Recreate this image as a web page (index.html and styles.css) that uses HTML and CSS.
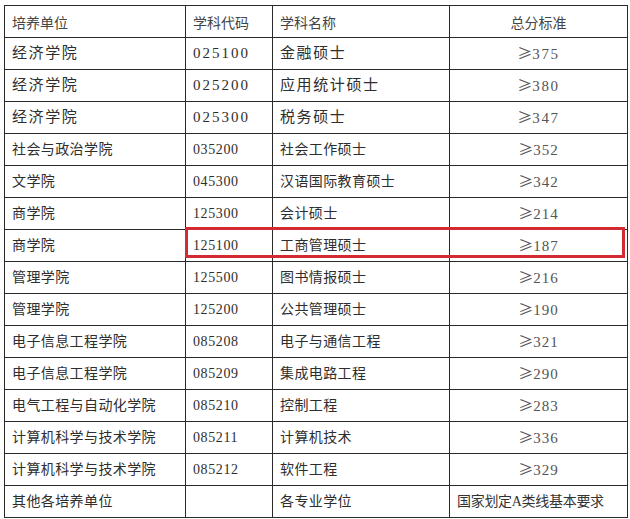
FILE: index.html
```html
<!DOCTYPE html>
<html lang="zh-CN">
<head>
<meta charset="utf-8">
<link rel="stylesheet" href="styles.css">
</head>
<body>
<div class="wrap">
<table class="grid">
  <colgroup>
    <col class="c1"><col class="c2"><col class="c3"><col class="c4">
  </colgroup>
  <tr class="head"><td>培养单位</td><td>学科代码</td><td>学科名称</td><td class="score">总分标准</td></tr>
  <tr class="big"><td>经济学院</td><td class="code">025100</td><td>金融硕士</td><td class="score"><span class="ge">≥</span>375</td></tr>
  <tr class="big"><td>经济学院</td><td class="code">025200</td><td>应用统计硕士</td><td class="score"><span class="ge">≥</span>380</td></tr>
  <tr class="big"><td>经济学院</td><td class="code">025300</td><td>税务硕士</td><td class="score"><span class="ge">≥</span>347</td></tr>
  <tr><td>社会与政治学院</td><td class="code">035200</td><td>社会工作硕士</td><td class="score"><span class="ge">≥</span>352</td></tr>
  <tr><td>文学院</td><td class="code">045300</td><td>汉语国际教育硕士</td><td class="score"><span class="ge">≥</span>342</td></tr>
  <tr><td>商学院</td><td class="code">125300</td><td>会计硕士</td><td class="score"><span class="ge">≥</span>214</td></tr>
  <tr><td>商学院</td><td class="code">125100</td><td>工商管理硕士</td><td class="score"><span class="ge">≥</span>187</td></tr>
  <tr><td>管理学院</td><td class="code">125500</td><td>图书情报硕士</td><td class="score"><span class="ge">≥</span>216</td></tr>
  <tr><td>管理学院</td><td class="code">125200</td><td>公共管理硕士</td><td class="score"><span class="ge">≥</span>190</td></tr>
  <tr><td>电子信息工程学院</td><td class="code">085208</td><td>电子与通信工程</td><td class="score"><span class="ge">≥</span>321</td></tr>
  <tr><td>电子信息工程学院</td><td class="code">085209</td><td>集成电路工程</td><td class="score"><span class="ge">≥</span>290</td></tr>
  <tr><td>电气工程与自动化学院</td><td class="code">085210</td><td>控制工程</td><td class="score"><span class="ge">≥</span>283</td></tr>
  <tr><td>计算机科学与技术学院</td><td class="code">085211</td><td>计算机技术</td><td class="score"><span class="ge">≥</span>336</td></tr>
  <tr><td>计算机科学与技术学院</td><td class="code">085212</td><td>软件工程</td><td class="score"><span class="ge">≥</span>329</td></tr>
  <tr><td>其他各培养单位</td><td class="code"></td><td>各专业学位</td><td class="note">国家划定A类线基本要求</td></tr>
</table>
<div class="highlight"></div>
</div>
</body>
</html>
```

FILE: styles.css
```css
html, body {
  margin: 0;
  padding: 0;
  background: #ffffff;
}
body {
  font-family: "Liberation Serif", "Noto Sans CJK SC", serif;
  color: #2e2e2e;
}
.wrap {
  position: relative;
  padding: 5px 0 0 4px;
}
.grid {
  border-collapse: collapse;
  table-layout: fixed;
  width: 623px;
}
.c1 { width: 181px; }
.c2 { width: 87px; }
.c3 { width: 177px; }
.c4 { width: 178px; }
.grid td {
  border: 1px solid #2a2a2a;
  height: 31px;
  padding: 0 0 0 7px;
  font-size: 14px;
  letter-spacing: 0.4px;
  white-space: nowrap;
  vertical-align: middle;
  line-height: 1;
}
.grid tr.head td {
  font-family: "Noto Sans CJK SC", sans-serif;
  font-size: 14px;
  color: #444;
  letter-spacing: 0;
}
.grid tr.big td {
  font-size: 15px;
  letter-spacing: 1.6px;
}
.grid tr.big td.code {
  letter-spacing: 2px;
}
.grid td.code {
  letter-spacing: 0.6px;
}
.grid td.score {
  text-align: center;
  padding: 0;
  font-size: 15px;
  letter-spacing: 1px;
  color: #555;
}
.ge {
  font-family: "Noto Sans CJK SC", sans-serif;
  font-size: 15px;
  letter-spacing: 0;
}
.grid tr.head td.score {
  font-size: 14px;
  letter-spacing: 0;
}
.grid td.note {
  padding-left: 7px;
  font-size: 14px;
  letter-spacing: -0.3px;
  color: #333;
}
.highlight {
  position: absolute;
  left: 185px;
  top: 227px;
  width: 434px;
  height: 25px;
  border: 3px solid #d42a32;
}
```
